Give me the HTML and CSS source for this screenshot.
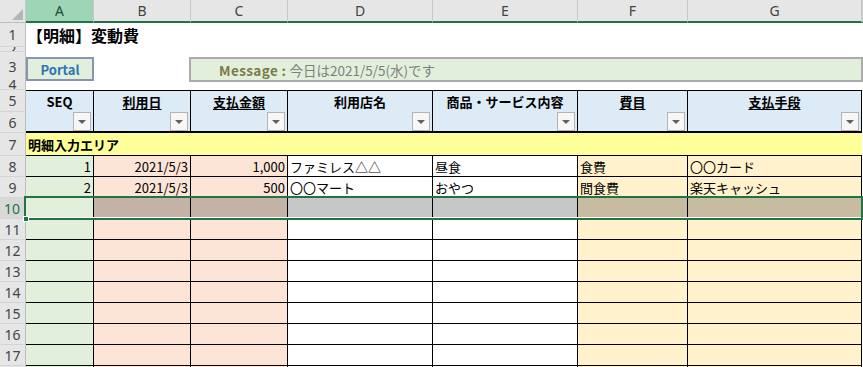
FILE: index.html
```html
<!DOCTYPE html>
<html lang="ja">
<head>
  <meta charset="UTF-8">
  <meta name="viewport" content="width=device-width, initial-scale=1.0">
  <title>【明細】変動費</title>
  <link rel="stylesheet" href="styles.css">
</head>
<body>
  <div class="sheet">
    <div class="row colhead">
      <div class="corner"><i></i></div>
      <div class="ch on">A</div>
      <div class="ch">B</div>
      <div class="ch">C</div>
      <div class="ch">D</div>
      <div class="ch">E</div>
      <div class="ch">F</div>
      <div class="ch">G</div>
      <div class="ch"></div>
    </div>

    <div class="row r1">
      <div class="rh">1</div>
      <div class="title">【明細】変動費</div>
    </div>
    <div class="row r2"><div class="rh">2</div></div>
    <div class="row r3">
      <div class="rh">3</div>
      <div class="shapes">
        <div class="portal">Portal</div>
        <div class="message"><b>Message :</b> 今日は2021/5/5(水)です</div>
      </div>
    </div>
    <div class="row r4"><div class="rh">4</div></div>

    <div class="row head">
      <div class="rh-pair">
        <div class="rh">5</div>
        <div class="rh">6</div>
      </div>
      <div class="hd"><span>SEQ</span><i class="filter"></i></div>
      <div class="hd"><span class="u">利用日</span><i class="filter"></i></div>
      <div class="hd"><span class="u">支払金額</span><i class="filter"></i></div>
      <div class="hd"><span>利用店名</span><i class="filter"></i></div>
      <div class="hd"><span>商品・サービス内容</span><i class="filter"></i></div>
      <div class="hd"><span class="u">費目</span><i class="filter"></i></div>
      <div class="hd"><span class="u">支払手段</span><i class="filter"></i></div>
    </div>

    <div class="row r7">
      <div class="rh">7</div>
      <div class="area">明細入力エリア</div>
    </div>

    <div class="row data">
      <div class="rh">8</div>
      <div class="a num">1</div>
      <div class="b num">2021/5/3</div>
      <div class="c num">1,000</div>
      <div class="d">ファミレス△△</div>
      <div class="e">昼食</div>
      <div class="f">食費</div>
      <div class="g">〇〇カード</div>
    </div>
    <div class="row data">
      <div class="rh">9</div>
      <div class="a num">2</div>
      <div class="b num">2021/5/3</div>
      <div class="c num">500</div>
      <div class="d">〇〇マート</div>
      <div class="e">おやつ</div>
      <div class="f">間食費</div>
      <div class="g">楽天キャッシュ</div>
    </div>
    <div class="row data sel">
      <div class="rh">10</div>
      <div class="a"></div><div class="b"></div><div class="c"></div><div class="d"></div><div class="e"></div><div class="f"></div><div class="g"></div>
      <div class="selbox"><i class="handle"></i></div>
    </div>
    <div class="row data">
      <div class="rh">11</div>
      <div class="a"></div><div class="b"></div><div class="c"></div><div class="d"></div><div class="e"></div><div class="f"></div><div class="g"></div>
    </div>
    <div class="row data">
      <div class="rh">12</div>
      <div class="a"></div><div class="b"></div><div class="c"></div><div class="d"></div><div class="e"></div><div class="f"></div><div class="g"></div>
    </div>
    <div class="row data">
      <div class="rh">13</div>
      <div class="a"></div><div class="b"></div><div class="c"></div><div class="d"></div><div class="e"></div><div class="f"></div><div class="g"></div>
    </div>
    <div class="row data">
      <div class="rh">14</div>
      <div class="a"></div><div class="b"></div><div class="c"></div><div class="d"></div><div class="e"></div><div class="f"></div><div class="g"></div>
    </div>
    <div class="row data">
      <div class="rh">15</div>
      <div class="a"></div><div class="b"></div><div class="c"></div><div class="d"></div><div class="e"></div><div class="f"></div><div class="g"></div>
    </div>
    <div class="row data">
      <div class="rh">16</div>
      <div class="a"></div><div class="b"></div><div class="c"></div><div class="d"></div><div class="e"></div><div class="f"></div><div class="g"></div>
    </div>
    <div class="row data">
      <div class="rh">17</div>
      <div class="a"></div><div class="b"></div><div class="c"></div><div class="d"></div><div class="e"></div><div class="f"></div><div class="g"></div>
    </div>
    <div class="row data">
      <div class="rh">18</div>
      <div class="a"></div><div class="b"></div><div class="c"></div><div class="d"></div><div class="e"></div><div class="f"></div><div class="g"></div>
    </div>
  </div>
</body>
</html>
```

FILE: styles.css
```css
* {
  box-sizing: border-box;
}

body {
  margin: 0;
  background-color: #fff;
  font-family: "Noto Sans CJK JP", "Noto Sans", sans-serif;
  font-size: 13px;
  color: #000;
  overflow: hidden;
}

.sheet {
  width: 863px;
  height: 367px;
  overflow: hidden;
}

.row {
  display: grid;
  grid-template-columns: 26px 68px 97px 97px 145px 145px 110px 174px 1fr;
}

/* row heights */
.colhead { height: 23px; }
.r1 { height: 24px; }
.r2 { height: 5px; }
.r3 { height: 28px; }
.r4 { height: 10px; }
.head { height: 43px; }
.r7 { height: 23px; }
.data { height: 21px; }

/* column letters */
.corner {
  background-color: #e6e6e6;
  border-right: 1px solid #c8c8c8;
  border-bottom: 1px solid #bdbdbd;
  display: flex;
  justify-content: flex-end;
  align-items: flex-end;
  padding: 0 2px 2px 0;
}

.corner i {
  width: 0;
  height: 0;
  border-left: 11px solid transparent;
  border-bottom: 11px solid #b5b5b5;
}

.ch {
  background-color: #e6e6e6;
  border-right: 1px solid #c8c8c8;
  border-bottom: 2px solid #217346;
  color: #444;
  font-family: "Noto Sans", sans-serif;
  font-size: 14px;
  line-height: 21px;
  text-align: center;
}

.ch.on {
  background-color: #9fd5b7;
  color: #1d4d33;
}

/* row numbers */
.rh {
  background-color: #e6e6e6;
  border-right: 1px solid #bdbdbd;
  border-bottom: 1px solid #d4d4d4;
  color: #444;
  font-family: "Noto Sans", sans-serif;
  font-size: 14px;
  display: flex;
  align-items: center;
  justify-content: center;
  overflow: hidden;
}

.rh-pair {
  display: flex;
  flex-direction: column;
}

.rh-pair .rh:first-child { height: 22px; }
.rh-pair .rh:last-child { height: 21px; }

.sel .rh {
  color: #217346;
  background-color: #d8d8d8;
  border-right: 2px solid #217346;
}

/* title and shapes */
.title {
  grid-column: 2 / -1;
  font-size: 16px;
  font-weight: bold;
  padding-left: 1px;
  display: flex;
  align-items: center;
}

.shapes {
  grid-column: 2 / -1;
  display: flex;
  padding-top: 5px;
}

.portal {
  width: 68px;
  height: 24px;
  background-color: #e2efda;
  border: 2px solid #8497b0;
  color: #2e75b6;
  font-weight: bold;
  display: flex;
  align-items: center;
  justify-content: center;
}

.message {
  flex: 1;
  height: 25px;
  margin-left: 95px;
  background-color: #e2efda;
  border: 2px solid #ababab;
  color: #7f7f7f;
  font-size: 13.5px;
  padding-left: 28px;
  display: flex;
  align-items: center;
  white-space: pre;
}

.message b {
  color: #7a7a48;
  letter-spacing: 0.4px;
}

/* table header */
.hd {
  background-color: #ddebf7;
  border-top: 1px solid #000;
  border-right: 1px solid #000;
  border-bottom: 2px solid #000;
  display: flex;
  flex-direction: column;
  align-items: center;
  font-weight: bold;
}

.hd span {
  height: 21px;
  line-height: 21px;
}

.hd .u {
  text-decoration: underline;
  text-underline-offset: 2px;
}

.filter {
  align-self: flex-end;
  width: 18px;
  height: 19px;
  margin-right: 2px;
  background-color: #f7f7f7;
  border: 1px solid #b4b4b4;
  display: flex;
  align-items: center;
  justify-content: center;
}

.filter::before {
  content: "";
  border-left: 4px solid transparent;
  border-right: 4px solid transparent;
  border-top: 4px solid #606060;
}

.area {
  grid-column: 2 / 9;
  background-color: #ffff99;
  border-bottom: 1px solid #000;
  font-weight: bold;
  padding-left: 2px;
  display: flex;
  align-items: center;
}

/* data cells */
.data > div:not(.rh):not(.selbox) {
  border-right: 1px solid #000;
  border-bottom: 1px solid #000;
  padding: 0 2px;
  display: flex;
  align-items: center;
  white-space: nowrap;
  overflow: hidden;
}

.data > .a { background-color: #e2efda; }
.data > .b, .data > .c { background-color: #fce4d6; }
.data > .d, .data > .e { background-color: #fff; }
.data > .f, .data > .g { background-color: #fff2cc; }

.data > div.a {
  border-bottom: 0;
}

.data > .num {
  justify-content: flex-end;
}

/* selected row 10 */
.sel {
  position: relative;
}

.sel > .b, .sel > .c { background-color: #c4b2a7; }
.sel > .d, .sel > .e { background-color: #c7c7c7; }
.sel > .f, .sel > .g { background-color: #c7bc9f; }

.selbox {
  position: absolute;
  left: 24px;
  top: -2px;
  width: 839px;
  height: 24px;
  z-index: 2;
  border: 2px solid #217346;
  box-shadow: inset 0 -1px 0 #fff;
  pointer-events: none;
}

.handle {
  position: absolute;
  left: -3px;
  bottom: -4px;
  width: 6px;
  height: 6px;
  background-color: #217346;
  border: 1px solid #fff;
}
```
